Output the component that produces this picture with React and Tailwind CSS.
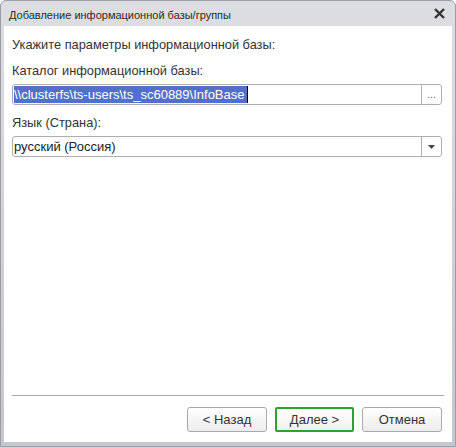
const font = { fontFamily: '"Liberation Sans", Arial, sans-serif' };

const Field = ({ children, icon }) => (
    <div className="flex h-[21px] rounded-[3px] border border-[#abafb5] bg-white">
        <div className="flex flex-1 items-center overflow-hidden pl-[1px]">{children}</div>
        <div className="flex w-[20px] items-center justify-center border-l border-[#abafb5] text-[#555]">{icon}</div>
    </div>
);

const Btn = ({ children, primary }) => (
    <button
        className={
            primary
                ? "h-[25px] w-[79px] rounded-[2px] border-2 border-[#2fa12f] bg-gradient-to-b from-white to-[#f1f1f1] text-[13px] text-[#333]"
                : "h-[25px] w-[80px] rounded-[3px] border border-[#a9a9a9] bg-gradient-to-b from-white to-[#ececec] text-[13px] text-[#333]"
        }
    >
        {children}
    </button>
);

export default function App() {
    return (
        <div style={font} className="flex h-[447px] w-[456px] flex-col overflow-hidden rounded-t-[6px] border border-[#9a9ea4] bg-gradient-to-b from-[#dcdee1] to-[#c4c7cb]">
            <div className="flex h-[25px] shrink-0 items-center justify-between pl-[8px] pr-[9px] pt-[3px]">
                <span className="text-[11px] text-[#2b2b2b]">Добавление информационной базы/группы</span>
                <svg width="13" height="13" viewBox="0 0 13 13" className="-mt-[3px]">
                    <path d="M2 2L11 11M11 2L2 11" stroke="#333" strokeWidth="2.4" />
                </svg>
            </div>
            <div className="mx-[3px] mb-[4px] flex flex-1 flex-col bg-white pl-[8px] pr-[10px] text-[12.8px] text-[#333]">
                <div className="mt-[10px] h-[18px] leading-[18px]">Укажите параметры информационной базы:</div>
                <div className="mt-[8px] h-[18px] leading-[18px]">Каталог информационной базы:</div>
                <div className="mt-[4px]">
                    <Field icon={<span className="text-[10px] leading-none">...</span>}>
                        <span className="flex h-[17px] items-center bg-[#5270cb] pr-[2px] text-[13px] text-white">\\clusterfs\ts-users\ts_sc60889\InfoBase</span>
                        <span className="h-[17px] w-[1px] bg-black" />
                    </Field>
                </div>
                <div className="mt-[9px] h-[18px] leading-[18px]">Язык (Страна):</div>
                <div className="mt-[4px]">
                    <Field
                        icon={
                            <svg width="7" height="4" viewBox="0 0 7 4">
                                <path d="M0 0H7L3.5 4Z" fill="#444" />
                            </svg>
                        }
                    >
                        <span className="text-[13px] text-[#222]">русский (Россия)</span>
                    </Field>
                </div>
                <div className="flex-1" />
                <div className="mr-[-2px] h-[1px] bg-[#a8a8a8]" />
                <div className="mb-[10px] mt-[11px] flex justify-end gap-[8px]">
                    <Btn>&lt; Назад</Btn>
                    <Btn primary>Далее &gt;</Btn>
                    <Btn>Отмена</Btn>
                </div>
            </div>
        </div>
    );
}
